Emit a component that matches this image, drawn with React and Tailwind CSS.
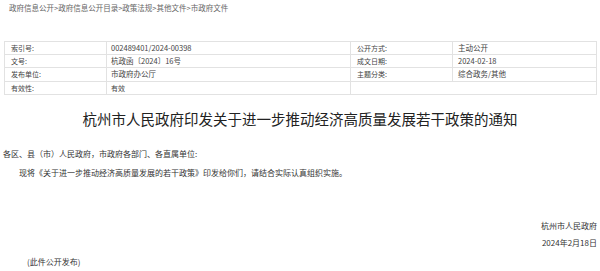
export default function App() {
  const rows = [
    ['索引号:', '002489401/2024-00398', '公开方式:', '主动公开'],
    ['文号:', '杭政函〔2024〕16号', '成文日期:', '2024-02-18'],
    ['发布单位:', '市政府办公厅', '主题分类:', '综合政务/其他'],
  ]

  return (
    <div className="w-[600px] h-[271px] overflow-hidden bg-white text-[#333] font-['Noto_Sans_CJK_SC','Noto_Sans',sans-serif]">
      {/* breadcrumb */}
      <div className="pt-[3px] pl-[9px] text-[7.5px] leading-[10px] text-[#666]">
        政府信息公开&gt;政府信息公开目录&gt;政策法规&gt;其他文件&gt;市政府文件
      </div>

      {/* info table */}
      <div className="mt-[28px] px-[4px] pr-[3px]">
        <table className="w-full border-collapse table-fixed text-[7px] leading-[10px] text-[#444]">
          <colgroup>
            <col className="w-[102px]" />
            <col className="w-[244px]" />
            <col className="w-[102px]" />
            <col />
          </colgroup>
          <tbody>
            {rows.map((r) => (
              <tr key={r[0]} className="h-[13.2px]">
                <td className="border border-[#e2e2e2] pl-[6px] py-0">{r[0]}</td>
                <td className="border border-[#e2e2e2] pl-[4px] py-0 text-[7.5px]">{r[1]}</td>
                <td className="border border-[#e2e2e2] pl-[6px] py-0">{r[2]}</td>
                <td className="border border-[#e2e2e2] pl-[5px] py-0 text-[7.5px]">{r[3]}</td>
              </tr>
            ))}
            <tr className="h-[13.2px]">
              <td className="border border-[#e2e2e2] pl-[6px] py-0">有效性:</td>
              <td className="border border-[#e2e2e2] pl-[4px] py-0">有效</td>
              <td colSpan={2} className="border border-[#e2e2e2]"></td>
            </tr>
          </tbody>
        </table>
      </div>

      {/* title */}
      <h1 className="mt-[14px] text-center text-[14.5px] leading-[20px] text-[#222]">
        杭州市人民政府印发关于进一步推动经济高质量发展若干政策的通知
      </h1>

      {/* body */}
      <div className="px-[3px] text-[8px] leading-[12px] text-[#333]">
        <p className="mt-[19px]">各区、县（市）人民政府，市政府各部门、各直属单位:</p>
        <p className="mt-[7px] indent-[2em]">
          现将《关于进一步推动经济高质量发展的若干政策》印发给你们，请结合实际认真组织实施。
        </p>
        <div className="mt-[41px] flex flex-col items-end">
          <p>杭州市人民政府</p>
          <p className="mt-[5px]">2024年2月18日</p>
        </div>
        <p className="mt-[7px] pl-[24px]">(此件公开发布)</p>
      </div>
    </div>
  )
}
